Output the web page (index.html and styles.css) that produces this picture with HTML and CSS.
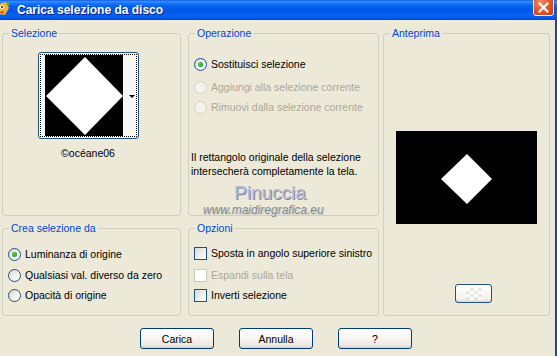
FILE: index.html
```html
<!DOCTYPE html>
<html lang="it">
<head>
    <meta charset="UTF-8">
    <title>Carica selezione da disco</title>
    <link rel="stylesheet" href="styles.css">
</head>
<body>
    <div class="window">
        <div class="titlebar">
            <svg class="app-icon" width="14" height="16" viewBox="0 0 14 16">
                <path d="M1 2 L9 0 L12 6 L8 13 L2 12 Z" fill="#f2b233"/>
                <circle cx="5" cy="5" r="2" fill="#fff"/>
                <circle cx="5" cy="5" r="1" fill="#1a1a1a"/>
                <path d="M2 10 L7 9 L6 12 Z" fill="#d94a1e"/>
                <path d="M9 1 L12 0 L12 4 Z" fill="#5dbb3a"/>
            </svg>
            <span class="title">Carica selezione da disco</span>
            <div class="close">
                <svg width="11" height="11" viewBox="0 0 11 11">
                    <path d="M1.5 1.5 L9.5 9.5 M9.5 1.5 L1.5 9.5" stroke="#fff" stroke-width="2.2" stroke-linecap="square"/>
                </svg>
            </div>
        </div>

        <div class="client">
            <div class="groups">
                <fieldset class="group sel">
                    <legend>Selezione</legend>
                    <div class="picker">
                        <div class="picker-focus">
                            <svg class="picker-img" width="78" height="81" viewBox="0 0 78 81">
                                <rect width="78" height="81" fill="#000"/>
                                <polygon points="40,2 78,41 40,80 1,41" fill="#fff"/>
                            </svg>
                            <div class="picker-strip"><span class="picker-arrow"></span></div>
                        </div>
                    </div>
                    <div class="caption">©océane06</div>
                </fieldset>

                <fieldset class="group op">
                    <legend>Operazione</legend>
                    <div class="opt first"><span class="radio checked"></span>Sostituisci selezione</div>
                    <div class="opt disabled second"><span class="radio"></span>Aggiungi alla selezione corrente</div>
                    <div class="opt disabled"><span class="radio"></span>Rimuovi dalla selezione corrente</div>
                    <p class="note">Il rettangolo originale della selezione<br>intersecherà completamente la tela.</p>
                </fieldset>

                <fieldset class="group prev">
                    <legend>Anteprima</legend>
                    <svg class="preview-img" width="141" height="93" viewBox="0 0 141 93">
                        <rect width="141" height="93" fill="#000"/>
                        <polygon points="71,23 96,48 71,73 45,48" fill="#fff"/>
                    </svg>
                    <div class="mini-btn"><span class="checker"></span></div>
                </fieldset>

                <fieldset class="group crea">
                    <legend>Crea selezione da</legend>
                    <div class="opt first"><span class="radio checked"></span>Luminanza di origine</div>
                    <div class="opt second"><span class="radio"></span>Qualsiasi val. diverso da zero</div>
                    <div class="opt"><span class="radio"></span>Opacità di origine</div>
                </fieldset>

                <fieldset class="group opz">
                    <legend>Opzioni</legend>
                    <div class="opt first"><span class="check"></span>Sposta in angolo superiore sinistro</div>
                    <div class="opt disabled second"><span class="check"></span>Espandi sulla tela</div>
                    <div class="opt"><span class="check"></span>Inverti selezione</div>
                </fieldset>
            </div>

            <div class="buttons">
                <button class="btn">Carica</button>
                <button class="btn">Annulla</button>
                <button class="btn">?</button>
            </div>
        </div>

        <!-- watermark over the dialog -->
        <div class="watermark">
            <div class="wm-name">Pinuccia</div>
            <div class="wm-url">www.maidiregrafica.eu</div>
        </div>
    </div>
</body>
</html>
```

FILE: styles.css
```css
body {
    margin: 0;
    font-family: "Liberation Sans", Arial, sans-serif;
    font-size: 10.5px;
    color: #000;
    background-color: #ece9d8;
}

.window {
    position: relative;
    width: 557px;
    height: 356px;
    overflow: hidden;
    background-color: #ece9d8;
}

/* Title bar */
.titlebar {
    display: flex;
    align-items: center;
    height: 20px;
    background: linear-gradient(to bottom,
        #0a5ee8 0%, #3a8cfb 8%, #1a78fa 16%, #0664f4 28%,
        #0058ea 45%, #005ae9 60%, #0661f3 75%, #045cec 88%, #0047c8 100%);
}

.app-icon {
    margin-left: -3px;
    flex-shrink: 0;
}

.title {
    margin-left: 6px;
    font-size: 12px;
    font-weight: bold;
    color: #fff;
    text-shadow: 1px 1px 0 #0a1f8a;
    letter-spacing: 0;
}

.close {
    display: flex;
    align-items: center;
    justify-content: center;
    align-self: flex-start;
    width: 21px;
    height: 21px;
    box-sizing: border-box;
    margin: -5px 3px 0 auto;
    border: 1px solid #f4f4f4;
    border-radius: 3px;
    background: radial-gradient(circle at 35% 30%, #f08a64 0%, #e0582f 50%, #c13a16 100%);
}

.close svg {
    margin-top: 4px;
}

/* Client area */
.client {
    height: 336px;
    border-right: 2px solid #0b45d4;
}

.groups {
    display: grid;
    grid-template-columns: 179px 7px 191px 4px 167px;
    grid-template-rows: 189px 94px;
    row-gap: 6px;
    grid-template-areas:
        "sel . op . prev"
        "crea . opz . prev";
    padding: 7px 0 0 2px;
}

.group {
    display: flex;
    flex-direction: column;
    margin: 0;
    padding: 0 5px;
    min-width: 0;
    border: 1px solid #d0d0bf;
    border-radius: 3px;
}

.group legend {
    margin-left: 1px;
    padding: 0 2px;
    line-height: 13px;
    color: #0046d5;
}

.sel { grid-area: sel; align-items: center; padding-right: 12px; }
.op { grid-area: op; }
.prev { grid-area: prev; }
.crea { grid-area: crea; }
.opz { grid-area: opz; }

/* Selezione picker */
.picker {
    width: 101px;
    height: 87px;
    box-sizing: border-box;
    margin-top: 12px;
    padding: 1px;
    border: 1px solid #1d5281;
    border-radius: 3px;
    background: #fff;
}

.picker-focus {
    display: flex;
    height: 100%;
    box-sizing: border-box;
    padding-left: 4px;
    border: 1px dotted #000;
}

.picker-img {
    display: block;
    flex-shrink: 0;
}

.picker-strip {
    flex: 1;
    display: flex;
    align-items: center;
    justify-content: flex-end;
    padding-right: 1px;
    background: #f6f6f4;
}

.picker-arrow {
    width: 0;
    height: 0;
    margin-top: 2px;
    border-left: 3px solid transparent;
    border-right: 3px solid transparent;
    border-top: 3px solid #000;
}

.caption {
    margin-top: 8px;
    line-height: 13px;
}

/* Radio / checkbox rows */
.opt {
    display: flex;
    align-items: center;
    gap: 4px;
    height: 20px;
    white-space: nowrap;
}

.op .first { margin-top: 14px; }
.op .second { margin-top: 3px; }
.crea .first { margin-top: 9px; }
.crea .second { margin-top: 1px; }
.opz .first { margin-top: 8px; }
.opz .second { margin-top: 2px; }

.opt.disabled {
    color: #aca899;
}

.radio {
    display: flex;
    align-items: center;
    justify-content: center;
    flex-shrink: 0;
    width: 13px;
    height: 13px;
    box-sizing: border-box;
    border: 1px solid #1c5180;
    border-radius: 50%;
    background: linear-gradient(135deg, #d8d7cf 0%, #f2f1ec 55%, #fff 100%);
}

.radio.checked::after {
    content: "";
    width: 5px;
    height: 5px;
    border-radius: 50%;
    background: radial-gradient(circle at 40% 40%, #55d255 0%, #21a121 70%, #1a861a 100%);
}

.opt.disabled .radio {
    border-color: #d5d2c4;
    background: #f3f2ec;
}

.check {
    flex-shrink: 0;
    width: 13px;
    height: 13px;
    box-sizing: border-box;
    border: 1px solid #1c5180;
    background: linear-gradient(135deg, #d8d7cf 0%, #f2f1ec 60%, #fff 100%);
}

.opt.disabled .check {
    border-color: #cac8bb;
    background: #fff;
}

.note {
    margin: 33px 0 0 -3px;
    line-height: 14px;
}

/* Anteprima */
.preview-img {
    display: block;
    align-self: center;
    margin-top: 91px;
}

.mini-btn {
    display: flex;
    align-items: center;
    justify-content: center;
    align-self: flex-start;
    width: 37px;
    height: 19px;
    box-sizing: border-box;
    margin: 60px 0 0 66px;
    border: 1px solid #1d5281;
    border-radius: 3px;
    background: linear-gradient(to bottom, #fff 0%, #f3f2ee 80%, #dcd8cc 100%);
}

.checker {
    width: 16px;
    height: 12px;
    background: repeating-conic-gradient(#e2e2e2 0% 25%, #fff 0% 50%) 0 0 / 8px 6px;
    opacity: 0.8;
}

/* Bottom buttons */
.buttons {
    display: flex;
    gap: 25px;
    padding: 12px 0 0 140px;
}

.btn {
    width: 74px;
    height: 21px;
    padding: 0;
    font-family: "Liberation Sans", Arial, sans-serif;
    font-size: 10.5px;
    color: #000;
    border: 1px solid #003c74;
    border-radius: 3px;
    background: linear-gradient(to bottom, #fff 0%, #f5f4f0 50%, #ebe9e1 85%, #d6d0c5 100%);
}

/* Watermark */
.watermark {
    position: absolute;
    left: 203px;
    top: 182px;
    display: flex;
    flex-direction: column;
}

.wm-name {
    margin-left: 31px;
    font-size: 19px;
    line-height: 21px;
    color: #b6bad6;
    text-shadow: 1px 1px 0 #7f86a4;
}

.wm-url {
    margin-top: 1px;
    font-size: 12px;
    font-style: italic;
    line-height: 13px;
    color: #8a8a8a;
    text-shadow: 1px 1px 0 #cfcfcf;
}
```
